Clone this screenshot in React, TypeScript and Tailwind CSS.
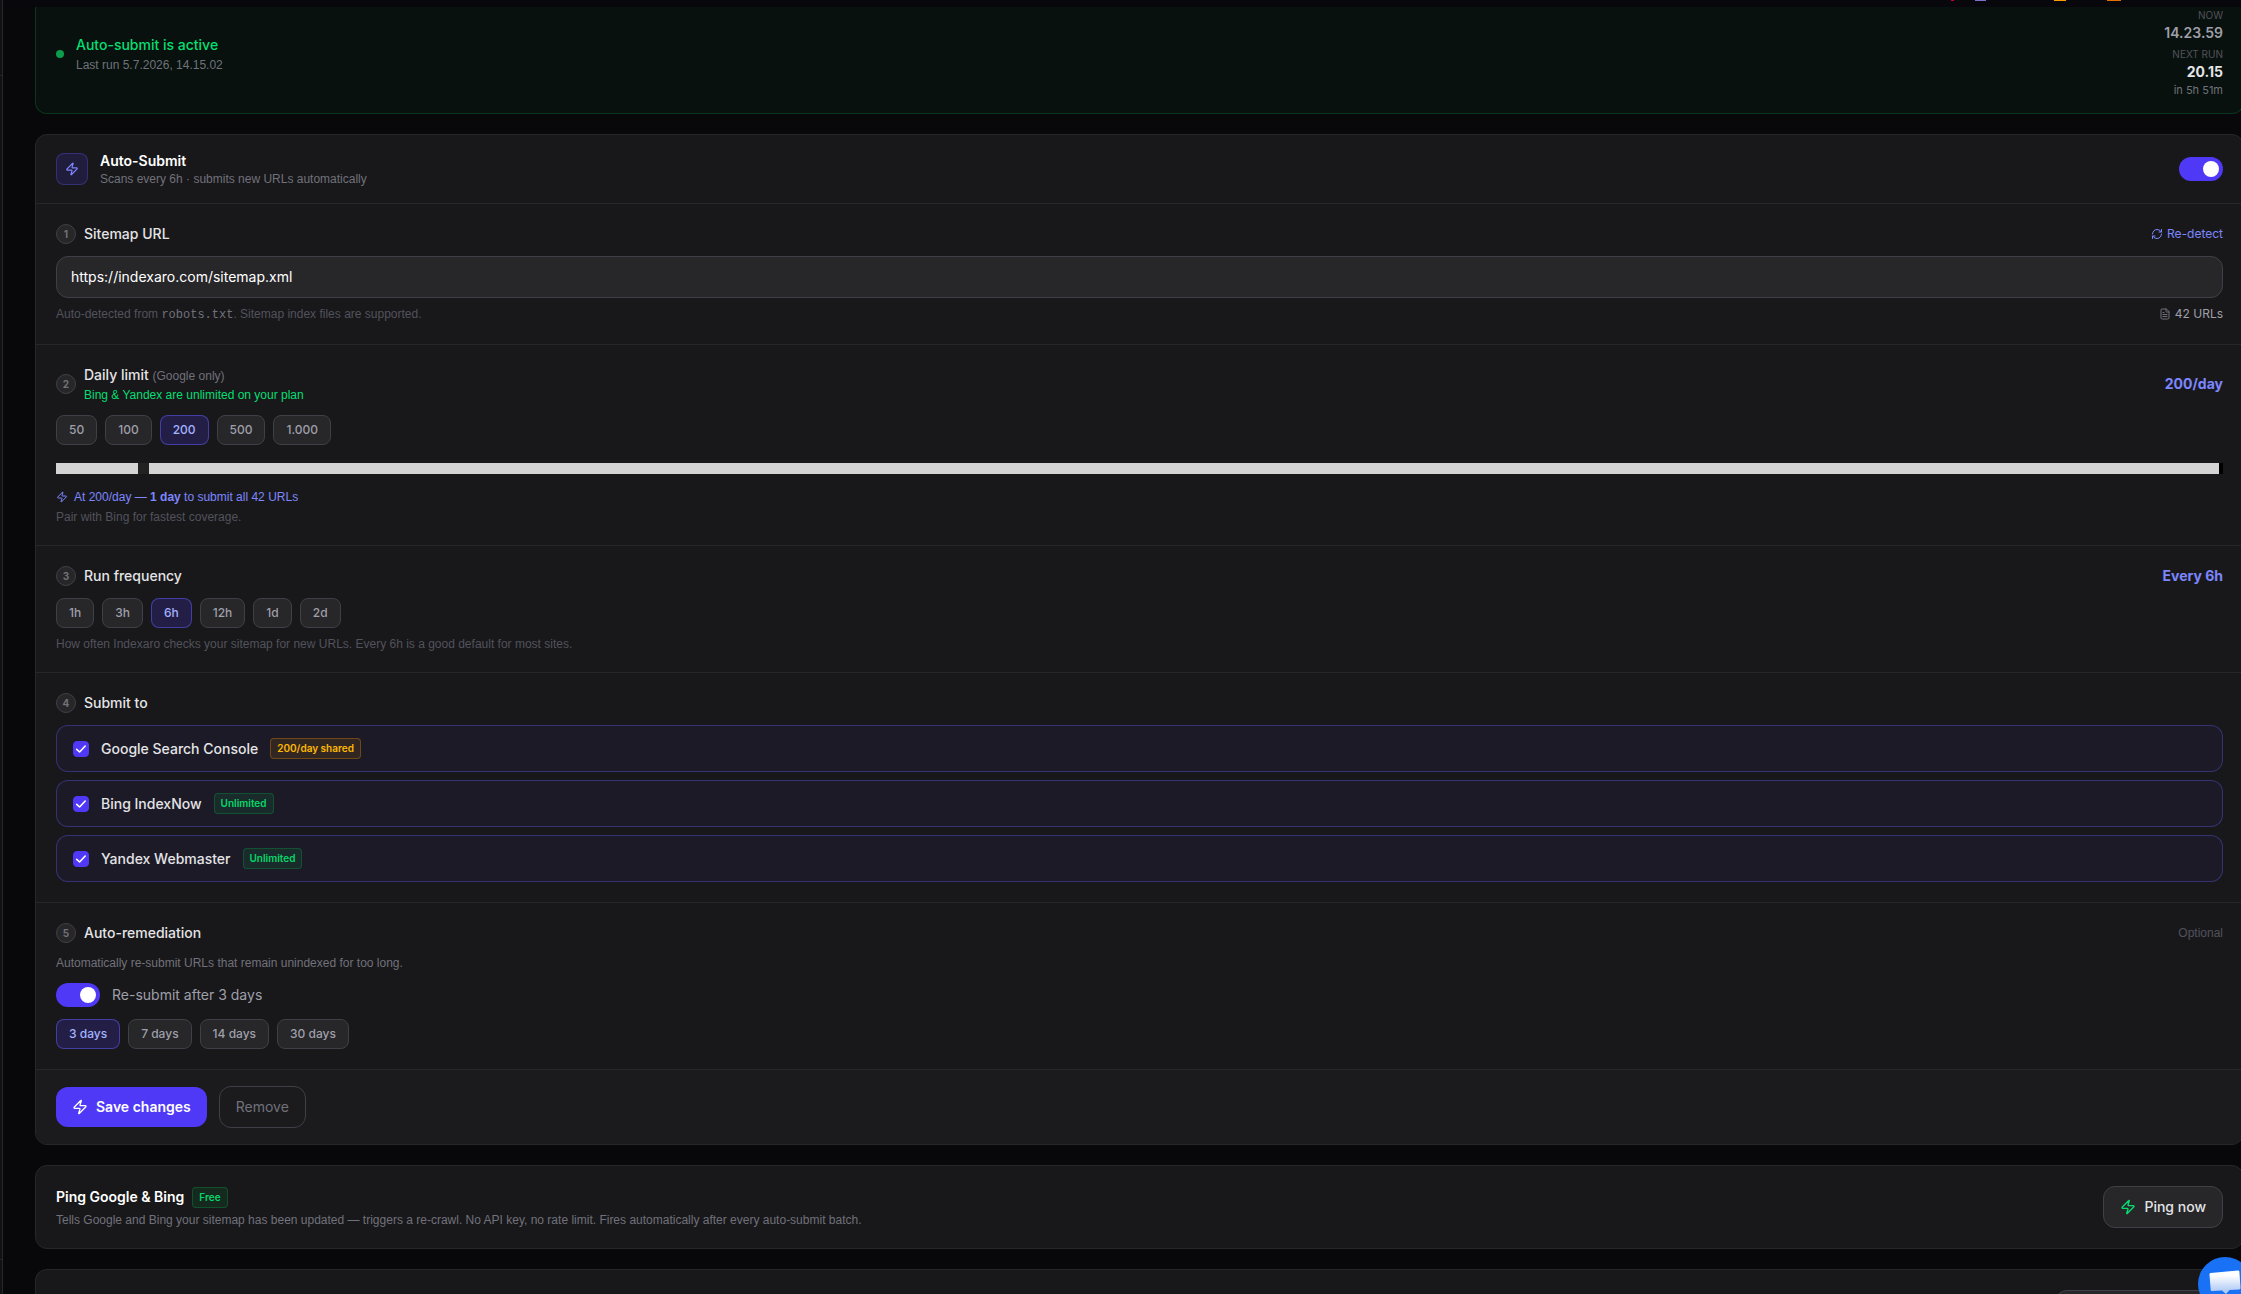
import React, { useState } from 'react';
import { FileText, RefreshCw, Zap } from 'lucide-react';

const LIMITS = [
  { value: 50, label: '50' },
  { value: 100, label: '100' },
  { value: 200, label: '200' },
  { value: 500, label: '500' },
  { value: 1000, label: '1.000' },
];

const FREQUENCIES = ['1h', '3h', '6h', '12h', '1d', '2d'];
const REMEDIATION_DAYS = [3, 7, 14, 30];

const ENGINES = [
  { id: 'google', name: 'Google Search Console', badge: '200/day shared', tone: 'amber' as const },
  { id: 'bing', name: 'Bing IndexNow', badge: 'Unlimited', tone: 'green' as const },
  { id: 'yandex', name: 'Yandex Webmaster', badge: 'Unlimited', tone: 'green' as const },
];

// Small print (hints, captions)
const hint = "font-['Liberation_Sans',sans-serif] text-xs font-normal";

const Badge: React.FC<{ tone: 'amber' | 'green'; children: React.ReactNode }> = ({ tone, children }) => (
  <span
    className={`rounded border px-1.5 py-0.5 text-[10px] leading-[15px] font-semibold ${
      tone === 'amber'
        ? 'border-amber-500/30 bg-amber-500/10 text-amber-400'
        : 'border-green-500/25 bg-green-500/10 text-[#05d76a]'
    }`}
  >
    {children}
  </span>
);

const Pill: React.FC<{ active: boolean; onClick: () => void; children: React.ReactNode }> = ({
  active,
  onClick,
  children,
}) => (
  <button
    type="button"
    aria-pressed={active}
    onClick={onClick}
    className={`rounded-lg border px-3 py-1.5 text-xs font-medium ${
      active
        ? 'border-indigo-500/50 bg-indigo-600/20 text-indigo-300'
        : 'border-zinc-700 bg-zinc-800 text-zinc-400'
    }`}
  >
    {children}
  </button>
);

const Toggle: React.FC<{ id: string; label: string; checked: boolean; onChange: (v: boolean) => void }> = ({
  id,
  label,
  checked,
  onChange,
}) => (
  <span className="relative block h-6 w-11 shrink-0">
    <input
      id={id}
      type="checkbox"
      role="switch"
      aria-label={label}
      checked={checked}
      onChange={(e) => onChange(e.target.checked)}
      className="peer block h-6 w-11 cursor-pointer appearance-none rounded-full bg-zinc-700 checked:bg-[#4f39f6]"
    />
    <span className="pointer-events-none absolute top-1 left-1 size-4 rounded-full bg-white peer-checked:left-6" />
  </span>
);

interface SectionProps {
  step: number;
  title: React.ReactNode;
  aside?: React.ReactNode;
  children: React.ReactNode;
}

const Section: React.FC<SectionProps> = ({ step, title, aside, children }) => (
  <section className="border-b border-zinc-800 p-5">
    <div className="mb-3 flex items-center justify-between">
      <div className="flex items-center gap-2">
        <span className="flex size-5 items-center justify-center rounded-full border border-zinc-700 bg-zinc-800 text-[10px] font-bold text-zinc-500">
          {step}
        </span>
        <div className="text-sm font-medium text-zinc-200">{title}</div>
      </div>
      {aside}
    </div>
    {children}
  </section>
);

const App: React.FC = () => {
  const [enabled, setEnabled] = useState(true);
  const [sitemap, setSitemap] = useState('https://indexaro.com/sitemap.xml');
  const [limit, setLimit] = useState(200);
  const [frequency, setFrequency] = useState('6h');
  const [targets, setTargets] = useState<string[]>(['google', 'bing', 'yandex']);
  const [resubmit, setResubmit] = useState(true);
  const [days, setDays] = useState(3);

  const toggleTarget = (id: string) => {
    setTargets(targets.includes(id) ? targets.filter((t) => t !== id) : [...targets, id]);
  };

  return (
    <div className="relative flex h-screen overflow-hidden bg-[#08080a] font-['Inter',sans-serif] text-zinc-200">
      {/* Sidebar edge */}
      <aside className="flex w-[3px] shrink-0 flex-col border-r border-zinc-800 bg-[#111113]">
        <div className="h-[76px] border-b border-zinc-800" />
        <div className="flex-1" />
        <div className="h-[35px] border-t border-zinc-800" />
      </aside>

      <div className="flex min-w-0 flex-1 flex-col">
        {/* Top bar */}
        <header className="flex h-[7px] shrink-0 items-start justify-end bg-[#08070c] pr-[120px]">
          <span className="mr-[21px] h-px w-[3px] bg-rose-700" />
          <span className="mr-[68px] h-px w-[11px] bg-[#7c6fd0]" />
          <span className="mr-[41px] h-px w-3 bg-amber-500" />
          <span className="h-px w-3.5 bg-amber-600" />
        </header>

        <main className="-mr-[3px] flex-1 space-y-5 overflow-hidden pl-8">
          {/* Status banner */}
          <section className="flex items-center justify-between rounded-b-xl border border-t-0 border-[#0a3720] bg-[#08110d] px-5 pt-px pb-[15px]">
            <div className="flex items-center gap-3 pt-0.5">
              <span className="size-2 rounded-full bg-[#0d9c4c]" />
              <div>
                <h2 className="text-sm font-medium text-[#05df72]">Auto-submit is active</h2>
                <p className={`${hint} mt-0.5 text-zinc-500`}>Last run 5.7.2026, 14.15.02</p>
              </div>
            </div>
            <div className="text-right">
              <p className="text-[10px] leading-[15px] text-zinc-600">NOW</p>
              <p className="text-sm font-semibold text-zinc-400">14.23.59</p>
              <p className="mt-1 text-[10px] leading-[15px] text-zinc-600">NEXT RUN</p>
              <p className="text-sm font-bold text-zinc-200">20.15</p>
              <p className="text-[11px] leading-4 text-zinc-500">in 5h 51m</p>
            </div>
          </section>

          <form
            onSubmit={(e) => e.preventDefault()}
            className="overflow-hidden rounded-xl border border-zinc-800 bg-[#18181a]"
          >
            <div className="flex items-center justify-between border-b border-zinc-800 px-5 py-4">
              <div className="flex items-center gap-3">
                <span className="flex size-8 items-center justify-center rounded-lg border border-indigo-500/30 bg-indigo-600/15">
                  <Zap className="size-3.5 text-indigo-400" />
                </span>
                <div>
                  <h2 className="text-sm font-semibold text-white">Auto-Submit</h2>
                  <p className={`${hint} text-zinc-500`}>Scans every 6h · submits new URLs automatically</p>
                </div>
              </div>
              <Toggle id="auto-submit" label="Auto-Submit" checked={enabled} onChange={setEnabled} />
            </div>

            <Section
              step={1}
              title={<label htmlFor="sitemap">Sitemap URL</label>}
              aside={
                <button type="button" className="flex items-center gap-1 text-xs text-indigo-400">
                  <RefreshCw className="size-3" />
                  Re-detect
                </button>
              }
            >
              <input
                id="sitemap"
                type="text"
                value={sitemap}
                onChange={(e) => setSitemap(e.target.value)}
                className="block w-full rounded-xl border border-zinc-700 bg-zinc-800 px-3.5 py-2.5 text-sm text-white"
              />
              <div className="mt-2 flex h-[18px] items-start justify-between text-xs">
                <p className={`${hint} text-zinc-600`}>
                  Auto-detected from <code className="font-['Liberation_Mono',monospace] text-zinc-500">robots.txt</code>. Sitemap index files are supported.
                </p>
                <p className="flex items-center gap-1 text-zinc-400">
                  <FileText className="size-3 text-zinc-500" />
                  42 URLs
                </p>
              </div>
            </Section>

            <Section
              step={2}
              title={
                <>
                  <label htmlFor="limit" className="block">
                    Daily limit <span className={`${hint} text-zinc-500`}>(Google only)</span>
                  </label>
                  <p className={`${hint} mt-0.5 text-[#05df72]`}>Bing &amp; Yandex are unlimited on your plan</p>
                </>
              }
              aside={<span className="text-sm font-bold text-indigo-400">{limit}/day</span>}
            >
              <div className="flex gap-2">
                {LIMITS.map((item) => (
                  <Pill key={item.value} active={limit === item.value} onClick={() => setLimit(item.value)}>
                    {item.label}
                  </Pill>
                ))}
              </div>
              <input
                id="limit"
                type="range"
                min={10}
                max={5000}
                step={10}
                value={limit}
                onChange={(e) => setLimit(Number(e.target.value))}
                className="mt-[18px] block h-[11px] w-full appearance-none bg-[linear-gradient(to_right,#d4d4d4_calc(100%-4px),#000_calc(100%-4px))] [&::-webkit-slider-thumb]:h-[11px] [&::-webkit-slider-thumb]:w-[11px] [&::-webkit-slider-thumb]:appearance-none [&::-webkit-slider-thumb]:bg-[#222]"
              />
              <p className={`${hint} mt-[15px] flex items-center gap-1.5 text-indigo-400`}>
                <Zap className="size-3" />
                <span>
                  At {limit}/day — <strong className="font-bold">1 day</strong> to submit all 42 URLs
                </span>
              </p>
              <p className={`${hint} mt-1 text-zinc-600`}>Pair with Bing for fastest coverage.</p>
            </Section>

            <Section
              step={3}
              title="Run frequency"
              aside={<span className="text-sm font-bold text-indigo-400">Every {frequency}</span>}
            >
              <div className="flex gap-2">
                {FREQUENCIES.map((item) => (
                  <Pill key={item} active={frequency === item} onClick={() => setFrequency(item)}>
                    {item}
                  </Pill>
                ))}
              </div>
              <p className={`${hint} mt-2 text-zinc-600`}>
                How often Indexaro checks your sitemap for new URLs. Every 6h is a good default for most sites.
              </p>
            </Section>

            <Section step={4} title="Submit to">
              <div className="space-y-2">
                {ENGINES.map((engine) => (
                  <label
                    key={engine.id}
                    className="flex cursor-pointer items-center gap-3 rounded-xl border border-indigo-500/35 bg-[#1c1a26] px-4 py-3"
                  >
                    <span className="relative size-4">
                      <input
                        type="checkbox"
                        checked={targets.includes(engine.id)}
                        onChange={() => toggleTarget(engine.id)}
                        className="peer block size-4 appearance-none rounded border border-zinc-600 checked:border-[#4f39f6] checked:bg-[#4f39f6]"
                      />
                      <svg
                        viewBox="0 0 16 16"
                        className="pointer-events-none absolute inset-0 hidden size-4 fill-none stroke-white stroke-[1.6] peer-checked:block"
                      >
                        <path d="M3.7 8.3 6.6 11 12.2 5" strokeLinecap="round" strokeLinejoin="round" />
                      </svg>
                    </span>
                    <span className="text-sm font-medium text-zinc-200">{engine.name}</span>
                    <Badge tone={engine.tone}>{engine.badge}</Badge>
                  </label>
                ))}
              </div>
            </Section>

            <Section
              step={5}
              title="Auto-remediation"
              aside={<span className={`${hint} text-zinc-600`}>Optional</span>}
            >
              <p className={`${hint} text-zinc-500`}>
                Automatically re-submit URLs that remain unindexed for too long.
              </p>
              <div className="my-3 flex items-center gap-3">
                <Toggle id="resubmit" label="Re-submit" checked={resubmit} onChange={setResubmit} />
                <label htmlFor="resubmit" className="text-sm text-zinc-400">
                  Re-submit after {days} days
                </label>
              </div>
              <div className="flex gap-2">
                {REMEDIATION_DAYS.map((item) => (
                  <Pill key={item} active={days === item} onClick={() => setDays(item)}>
                    {item} days
                  </Pill>
                ))}
              </div>
            </Section>

            <div className="flex items-center gap-3 bg-[#1b1b1d] px-5 py-4">
              <button
                type="submit"
                className="flex items-center gap-2 rounded-xl bg-[#4f39f6] px-4 py-2.5 text-sm font-semibold text-white"
              >
                <Zap className="size-4" />
                Save changes
              </button>
              <button
                type="button"
                className="rounded-xl border border-zinc-700 px-4 py-2.5 text-sm text-zinc-500"
              >
                Remove
              </button>
            </div>
          </form>

          <section className="flex items-center justify-between rounded-xl border border-zinc-800 bg-[#18181a] p-5">
            <div>
              <div className="flex items-center gap-2">
                <h2 className="text-sm font-semibold text-white">Ping Google &amp; Bing</h2>
                <Badge tone="green">Free</Badge>
              </div>
              <p className={`${hint} mt-1 text-zinc-500`}>
                Tells Google and Bing your sitemap has been updated — triggers a re-crawl. No API key, no rate limit. Fires automatically after every auto-submit batch.
              </p>
            </div>
            <button
              type="button"
              className="flex items-center gap-2 rounded-xl border border-zinc-700 bg-zinc-800 px-4 py-2.5 text-sm font-medium text-zinc-200"
            >
              <Zap className="size-4 text-[#05df72]" />
              Ping now
            </button>
          </section>

          <section className="flex justify-end rounded-t-xl border border-b-0 border-zinc-800 bg-[#18181a] p-5">
            <button
              type="button"
              aria-label="Open"
              className="h-[42px] w-[168px] rounded-xl border border-zinc-700 bg-zinc-800"
            />
          </section>
        </main>
      </div>

      {/* Chat launcher */}
      <button
        type="button"
        aria-label="Open chat"
        className="absolute -right-[11px] -bottom-[17px] flex size-[54px] items-center justify-center rounded-full bg-[#1972f5]"
      >
        <svg viewBox="0 0 32 28" className="w-8">
          <defs>
            <linearGradient id="bubble" x1="0" y1="0" x2="0" y2="1">
              <stop offset="0.2" stopColor="#fff" />
              <stop offset="0.85" stopColor="#b4cdf6" />
            </linearGradient>
          </defs>
          <path
            fill="url(#bubble)"
            d="M1.500 3 29 .5c.8 0 1.300.4 1.400 1.200L31.500 18c0 .8-.4 1.300-1.200 1.400L20.500 20l-3.500 4-4-3.500L3 21c-.8 0-1.200-.4-1.300-1.100L.5 4.400c0-.8.300-1.300 1-1.400Z"
          />
        </svg>
      </button>
    </div>
  );
};

export default App;
